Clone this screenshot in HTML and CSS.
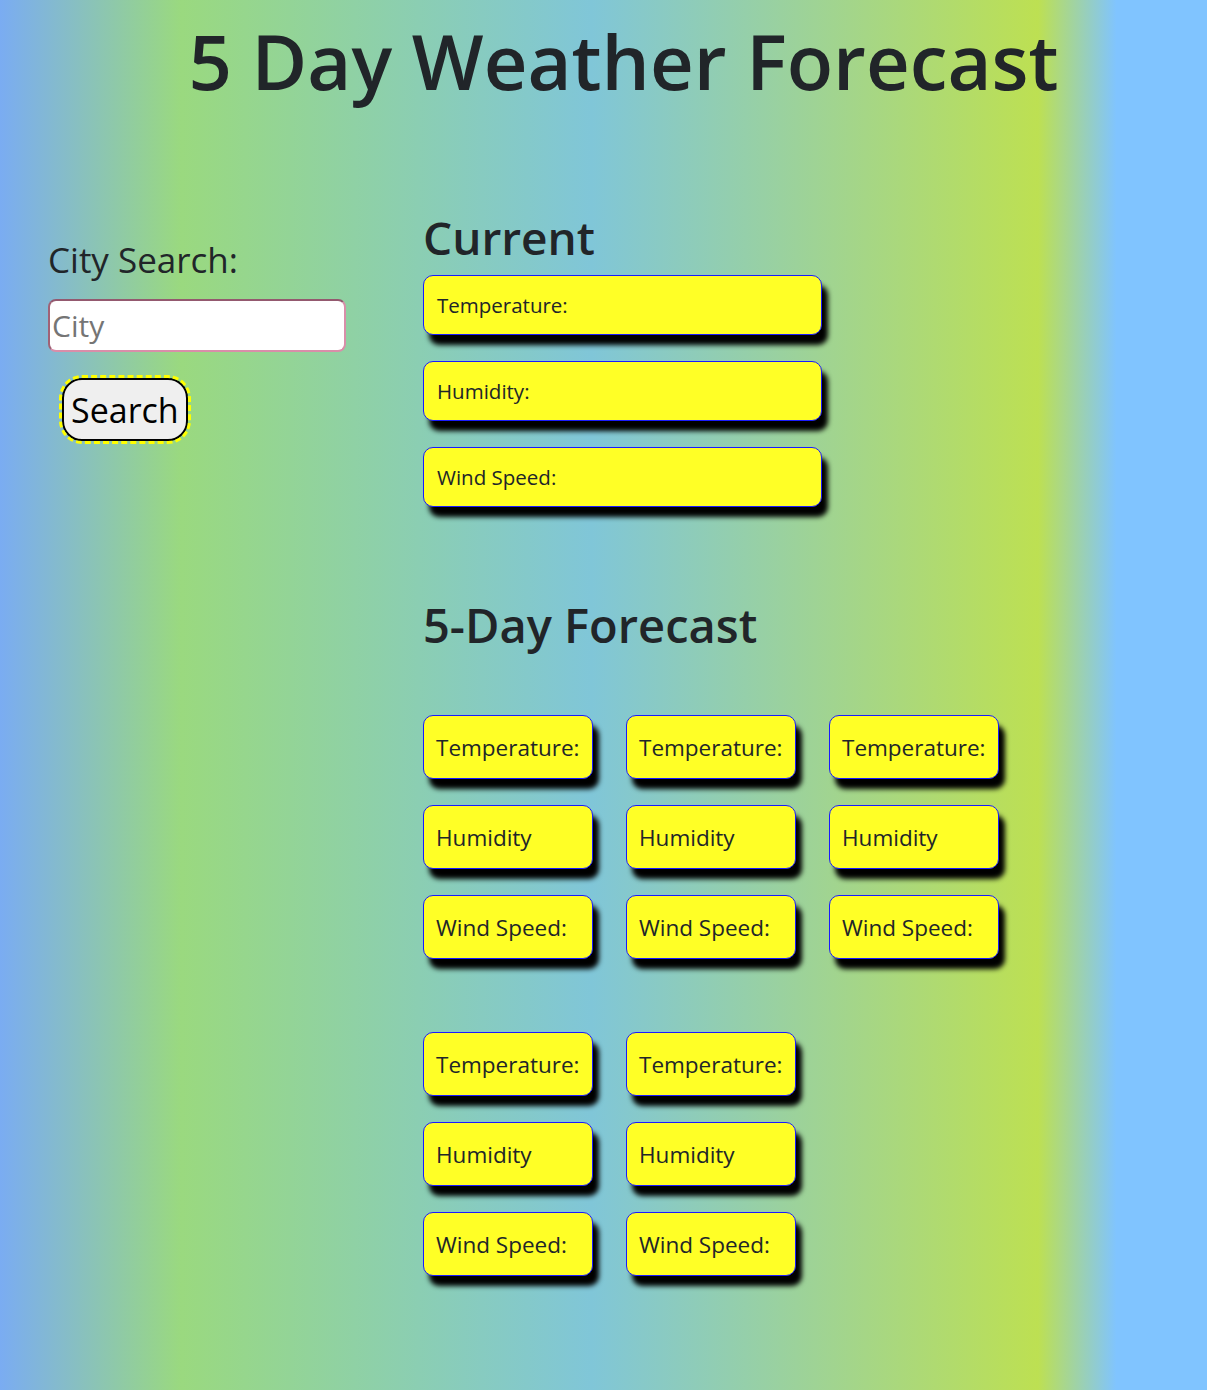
FILE: index.html
```html
<!DOCTYPE html>
<html lang="en">
<head>
<meta charset="utf-8">
<title>5 Day Weather Forecast</title>
<link rel="stylesheet" href="styles.css">
</head>
<body>
<header class="title-bar">
  <h1 class="title">5 Day Weather Forecast</h1>
</header>
<main class="layout">
  <aside class="search-panel">
    <label class="search-label" for="city">City Search:</label>
    <input id="city" class="city-input" type="text" placeholder="City">
    <button class="search-btn" type="button">Search</button>
  </aside>
  <section class="weather">
    <h2 class="section-title">Current</h2>
    <div class="current-list">
      <div class="card current-card">Temperature:</div>
      <div class="card current-card">Humidity:</div>
      <div class="card current-card">Wind Speed:</div>
    </div>
    <h2 class="section-title forecast-title">5-Day Forecast</h2>
    <div class="forecast-grid">
      <div class="day">
        <div class="card day-card">Temperature:</div>
        <div class="card day-card">Humidity</div>
        <div class="card day-card">Wind Speed:</div>
      </div>
      <div class="day">
        <div class="card day-card">Temperature:</div>
        <div class="card day-card">Humidity</div>
        <div class="card day-card">Wind Speed:</div>
      </div>
      <div class="day">
        <div class="card day-card">Temperature:</div>
        <div class="card day-card">Humidity</div>
        <div class="card day-card">Wind Speed:</div>
      </div>
      <div class="day">
        <div class="card day-card">Temperature:</div>
        <div class="card day-card">Humidity</div>
        <div class="card day-card">Wind Speed:</div>
      </div>
      <div class="day">
        <div class="card day-card">Temperature:</div>
        <div class="card day-card">Humidity</div>
        <div class="card day-card">Wind Speed:</div>
      </div>
    </div>
  </section>
</main>
</body>
</html>
```

FILE: styles.css
```css
html, body {
  margin: 0;
  padding: 0;
}

body {
  min-height: 1390px;
  font-family: "Open Sans", "Noto Sans", sans-serif;
  color: #212529;
  background: linear-gradient(to right,
    #7aacf2 0%,
    #9ad97f 15%,
    #80c6d8 49%,
    #bde052 86%,
    #80c4ff 92.5%,
    #80c4ff 100%);
}

.title-bar {
  padding-left: 40px;
  text-align: center;
}

.title {
  margin: 15px 0 0;
  font-size: 76px;
  font-weight: 600;
  line-height: 1.2;
}

.layout {
  display: flex;
  padding-left: 48px;
  margin-top: 104px;
}

.search-panel {
  width: 375px;
  flex: none;
  display: flex;
  flex-direction: column;
  align-items: flex-start;
}

.search-label {
  margin-top: 29px;
  font-size: 35px;
  line-height: 1.2;
}

.city-input {
  margin-top: 18px;
  box-sizing: border-box;
  width: 298px;
  height: 53px;
  padding: 0 2px;
  border: 2px solid #d98ea9;
  border-top-color: #94596f;
  border-left-color: #a06276;
  border-radius: 8px;
  background: #fff;
  font-family: "Open Sans", "Noto Sans", sans-serif;
  font-size: 30px;
  color: #212529;
}

.city-input::placeholder {
  color: #757575;
}

.search-btn {
  margin: 26px 0 0 14px;
  box-sizing: border-box;
  height: 63px;
  padding: 0 7px;
  border: 2px solid #000;
  border-radius: 20px;
  outline: 3px dashed #ffff00;
  background: #efefef;
  font-family: "Open Sans", "Noto Sans", sans-serif;
  font-size: 34px;
  line-height: 1;
  color: #000;
}

.weather {
  flex: 1;
}

.section-title {
  margin: 0;
  font-size: 46px;
  font-weight: 600;
  line-height: 1.2;
}

.forecast-title {
  margin-top: 90px;
  font-size: 47px;
}

.card {
  box-sizing: border-box;
  display: flex;
  align-items: center;
  border: 1px solid #1a1aff;
  border-radius: 10px;
  background: #ffff26;
  box-shadow: 6px 10px 5px #000;
  color: #212529;
  white-space: nowrap;
}

.current-list {
  margin-top: 10px;
  display: flex;
  flex-direction: column;
  gap: 26px;
}

.current-card {
  width: 399px;
  height: 60px;
  padding: 0 13px;
  font-size: 20.5px;
  line-height: 1.5;
}

.forecast-grid {
  margin-top: 61px;
  display: grid;
  grid-template-columns: repeat(3, 170px);
  column-gap: 33px;
  row-gap: 73px;
}

.day {
  display: flex;
  flex-direction: column;
  gap: 26px;
}

.day-card {
  width: 170px;
  height: 64px;
  padding: 3px 12px 0;
  font-size: 22.5px;
  line-height: 1.5;
}
```
